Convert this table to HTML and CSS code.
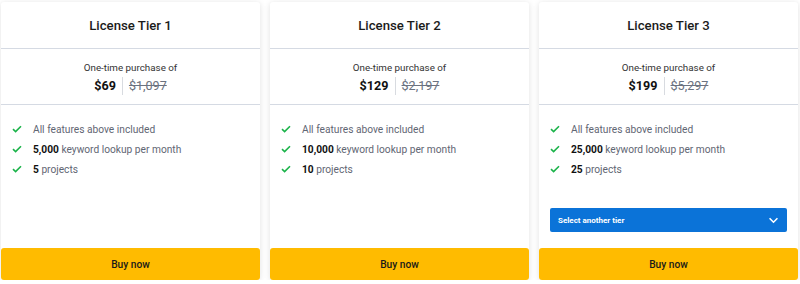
FILE: index.html
```html
<!DOCTYPE html>
<html>
<head>
<meta charset="utf-8">
<link rel="stylesheet" href="styles.css">
</head>
<body>
<div class="tiers">
  <div class="card">
    <div class="card-head">License Tier 1</div>
    <div class="price">
      <div class="price-label">One-time purchase of</div>
      <div class="price-row"><span class="now">$69</span><span class="was">$1,097</span></div>
    </div>
    <ul class="features">
      <li><svg class="check" viewBox="0 0 10 8"><path d="M1 4.2 L3.6 6.6 L9 1.2"/></svg><span>All features above included</span></li>
      <li><svg class="check" viewBox="0 0 10 8"><path d="M1 4.2 L3.6 6.6 L9 1.2"/></svg><span><b>5,000</b> keyword lookup per month</span></li>
      <li><svg class="check" viewBox="0 0 10 8"><path d="M1 4.2 L3.6 6.6 L9 1.2"/></svg><span><b>5</b> projects</span></li>
    </ul>
    <button class="buy">Buy now</button>
  </div>
  <div class="card">
    <div class="card-head">License Tier 2</div>
    <div class="price">
      <div class="price-label">One-time purchase of</div>
      <div class="price-row"><span class="now">$129</span><span class="was">$2,197</span></div>
    </div>
    <ul class="features">
      <li><svg class="check" viewBox="0 0 10 8"><path d="M1 4.2 L3.6 6.6 L9 1.2"/></svg><span>All features above included</span></li>
      <li><svg class="check" viewBox="0 0 10 8"><path d="M1 4.2 L3.6 6.6 L9 1.2"/></svg><span><b>10,000</b> keyword lookup per month</span></li>
      <li><svg class="check" viewBox="0 0 10 8"><path d="M1 4.2 L3.6 6.6 L9 1.2"/></svg><span><b>10</b> projects</span></li>
    </ul>
    <button class="buy">Buy now</button>
  </div>
  <div class="card">
    <div class="card-head">License Tier 3</div>
    <div class="price">
      <div class="price-label">One-time purchase of</div>
      <div class="price-row"><span class="now">$199</span><span class="was">$5,297</span></div>
    </div>
    <ul class="features">
      <li><svg class="check" viewBox="0 0 10 8"><path d="M1 4.2 L3.6 6.6 L9 1.2"/></svg><span>All features above included</span></li>
      <li><svg class="check" viewBox="0 0 10 8"><path d="M1 4.2 L3.6 6.6 L9 1.2"/></svg><span><b>25,000</b> keyword lookup per month</span></li>
      <li><svg class="check" viewBox="0 0 10 8"><path d="M1 4.2 L3.6 6.6 L9 1.2"/></svg><span><b>25</b> projects</span></li>
    </ul>
    <div class="select"><span>Select another tier</span><svg class="chev" viewBox="0 0 12 8"><path d="M1.5 1.5 L6 6 L10.5 1.5"/></svg></div>
    <button class="buy">Buy now</button>
  </div>
</div>
</body>
</html>
```
FILE: styles.css
```css
html, body {
  margin: 0;
  padding: 0;
  background: #ffffff;
  font-family: Roboto, "Noto Sans", sans-serif;
}
.tiers {
  display: flex;
  gap: 10px;
  padding: 2px 2px 0 1px;
}
.card {
  width: 259px;
  height: 278px;
  background: #fff;
  border-radius: 3px;
  box-shadow: 0 1px 6px rgba(0,0,0,0.12);
  display: flex;
  flex-direction: column;
}
.card-head {
  height: 46px;
  border-bottom: 1px solid #d5dae3;
  display: flex;
  align-items: center;
  justify-content: center;
  font-size: 13.2px;
  font-weight: 500;
  color: #1b1b1b;
}
.price {
  height: 56px;
  border-bottom: 1px solid #d5dae3;
  display: flex;
  flex-direction: column;
  align-items: center;
  padding-top: 12px;
  box-sizing: border-box;
}
.price-label {
  font-size: 9.8px;
  color: #333;
  line-height: 13px;
}
.price-row {
  display: flex;
  align-items: center;
  margin-top: 3px;
  font-size: 12.6px;
  line-height: 18px;
}
.now {
  font-weight: 700;
  color: #111;
  padding-right: 6px;
  border-right: 1px solid #d8dbe0;
}
.was {
  color: #6b7280;
  text-decoration: line-through;
  padding-left: 6px;
}
.features {
  list-style: none;
  margin: 0;
  padding: 14px 0 0 11px;
}
.features li {
  display: flex;
  align-items: center;
  height: 20px;
  font-size: 10.2px;
  color: #5f6673;
}
.features b {
  color: #111;
  font-weight: 700;
}
.check {
  width: 10px;
  height: 8px;
  margin-right: 11px;
  fill: none;
  stroke: #1bb34a;
  stroke-width: 1.6;
}
.select {
  margin: auto 11px 0 11px;
  height: 24px;
  background: #0b73d8;
  border-radius: 2px;
  display: flex;
  align-items: center;
  justify-content: space-between;
  padding: 0 8px 0 8px;
  color: #fff;
  font-size: 8px;
  font-weight: 700;
}
.chev {
  width: 11px;
  height: 7px;
  fill: none;
  stroke: #fff;
  stroke-width: 1.8;
}
.buy {
  margin-top: auto;
  height: 32px;
  border: none;
  border-radius: 3px;
  background: #ffbb00;
  color: #1a1a1a;
  font-family: Roboto, "Noto Sans", sans-serif;
  font-size: 10.2px;
  font-weight: 500;
}
.select + .buy {
  margin-top: 16px;
}
```
